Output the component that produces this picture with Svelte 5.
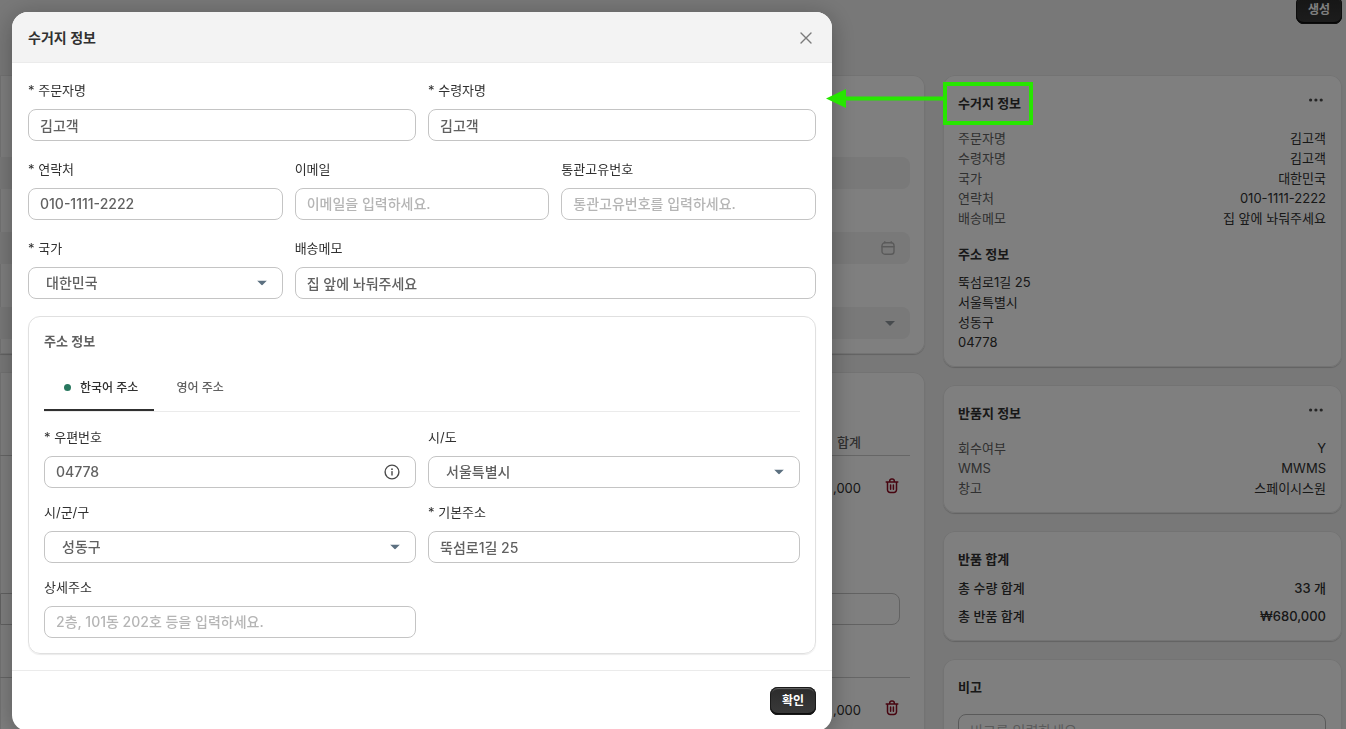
<script>
  const orderInfo = [
    ['주문자명', '김고객'],
    ['수령자명', '김고객'],
    ['국가', '대한민국'],
    ['연락처', '010-1111-2222'],
    ['배송메모', '집 앞에 놔둬주세요']
  ];
  const addressLines = ['뚝섬로1길 25', '서울특별시', '성동구', '04778'];
  const returnInfo = [
    ['회수여부', 'Y'],
    ['WMS', 'MWMS'],
    ['창고', '스페이시스원']
  ];
  const totals = [
    ['총 수량 합계', '33 개'],
    ['총 반품 합계', '₩680,000']
  ];
</script>

{#snippet caret()}
  <svg class="caret" width="10" height="5" viewBox="0 0 10 5" aria-hidden="true"><path d="M0 0h10L5 5z" fill="#5c7080" /></svg>
{/snippet}

{#snippet dots()}
  <button class="icon-btn" type="button">
    <svg width="16" height="6" viewBox="0 0 16 6" aria-hidden="true">
      <g fill="#4a4a4a"><circle cx="2.6" cy="3" r="1.6" /><circle cx="7.9" cy="3" r="1.6" /><circle cx="13.2" cy="3" r="1.6" /></g>
    </svg>
  </button>
{/snippet}

{#snippet trash()}
  <button class="icon-btn trash" type="button">
    <svg width="14" height="16" viewBox="0 0 14 16" fill="none" stroke="#8e0b21" stroke-width="1.5" stroke-linecap="round" stroke-linejoin="round" aria-hidden="true">
      <path d="M1.2 4h11.6M4.7 3.8V3a2 2 0 0 1 2-1.9h.6a2 2 0 0 1 2 1.9v.8M2.5 4.2v7.6a2.6 2.6 0 0 0 2.6 2.6h3.8a2.6 2.6 0 0 0 2.6-2.6V4.2M5.6 7v4.2M8.4 7v4.2" />
    </svg>
  </button>
{/snippet}

<div class="page">
  <header class="topbar"><button class="primary" type="button">생성</button></header>

  <div class="columns">
    <main>
      <section class="card wide filters">
        <div class="disabled"></div>
        <div class="disabled">
          <svg width="14" height="14" viewBox="0 0 14 14" fill="none" stroke="#b5b5b5" stroke-width="1.4" stroke-linecap="round" aria-hidden="true">
            <rect x="1" y="1.8" width="12" height="11.4" rx="2.8" /><path d="M1 5.8h12M3.8 .7v1M10.2 .7v1" />
          </svg>
        </div>
        <div class="disabled">
          <svg width="10" height="5" viewBox="0 0 10 5" aria-hidden="true"><path d="M0 0h10L5 5z" fill="#8f979d" /></svg>
        </div>
      </section>

      <section class="card wide items">
        <table>
          <thead><tr><th>합계</th><th class="act"></th></tr></thead>
          <tbody>
            <tr><td>,000</td><td class="act">{@render trash()}</td></tr>
            <tr class="note"><td colspan="2"><input type="text" /></td></tr>
            <tr><td>,000</td><td class="act">{@render trash()}</td></tr>
          </tbody>
        </table>
      </section>
    </main>

    <aside>
      <section class="card">
        <div class="card-head"><h2>수거지 정보</h2>{@render dots()}</div>
        <dl>
          {#each orderInfo as [name, value]}
            <div><dt>{name}</dt><dd>{value}</dd></div>
          {/each}
        </dl>
        <h2 class="sub">주소 정보</h2>
        {#each addressLines as line}<p>{line}</p>{/each}
      </section>

      <section class="card">
        <div class="card-head"><h2>반품지 정보</h2>{@render dots()}</div>
        <dl>
          {#each returnInfo as [name, value]}
            <div><dt>{name}</dt><dd>{value}</dd></div>
          {/each}
        </dl>
      </section>

      <section class="card totals">
        <h2>반품 합계</h2>
        <dl>
          {#each totals as [name, value]}
            <div><dt>{name}</dt><dd>{value}</dd></div>
          {/each}
        </dl>
      </section>

      <section class="card remark">
        <h2><label for="remark">비고</label></h2>
        <textarea id="remark" rows="3" placeholder="비고를 입력하세요."></textarea>
      </section>
    </aside>
  </div>
</div>

<div class="backdrop">
  <div class="dialog" role="dialog" aria-modal="true" aria-labelledby="dialog-title">
    <header class="dialog-head">
      <h1 id="dialog-title">수거지 정보</h1>
      <button class="icon-btn" type="button">
        <svg width="12" height="12" viewBox="0 0 12 12" fill="none" stroke="#7a7a7a" stroke-width="1.4" stroke-linecap="round" aria-hidden="true"><path d="M1 1l10 10M11 1L1 11" /></svg>
      </button>
    </header>

    <form class="dialog-body">
      <div class="grid two">
        <div class="field"><label for="orderer">* 주문자명</label><input id="orderer" type="text" value="김고객" /></div>
        <div class="field"><label for="receiver">* 수령자명</label><input id="receiver" type="text" value="김고객" /></div>
      </div>
      <div class="grid three">
        <div class="field"><label for="phone">* 연락처</label><input id="phone" type="tel" value="010-1111-2222" /></div>
        <div class="field"><label for="email">이메일</label><input id="email" type="email" placeholder="이메일을 입력하세요." /></div>
        <div class="field"><label for="customs">통관고유번호</label><input id="customs" type="text" placeholder="통관고유번호를 입력하세요." /></div>
        <div class="field">
          <label for="country">* 국가</label>
          <div class="select"><select id="country"><option>대한민국</option></select>{@render caret()}</div>
        </div>
        <div class="field span"><label for="memo">배송메모</label><input id="memo" type="text" value="집 앞에 놔둬주세요" /></div>
      </div>

      <section class="address">
        <h2>주소 정보</h2>
        <div class="tabs" role="tablist">
          <button class="tab active" type="button" role="tab" aria-selected="true"><i></i>한국어 주소</button>
          <button class="tab" type="button" role="tab" aria-selected="false">영어 주소</button>
        </div>
        <div class="grid two tight">
          <div class="field">
            <label for="zip">* 우편번호</label>
            <div class="with-icon">
              <input id="zip" type="text" value="04778" />
              <svg class="info" width="16" height="16" viewBox="0 0 16 16" fill="none" stroke="#4a4a4a" stroke-width="1.4" stroke-linecap="round" aria-hidden="true">
                <circle cx="8" cy="8" r="6.9" /><path d="M8 7.6v3.4" /><circle cx="8" cy="5.2" r=".9" fill="#4a4a4a" stroke="none" />
              </svg>
            </div>
          </div>
          <div class="field">
            <label for="state">시/도</label>
            <div class="select"><select id="state"><option>서울특별시</option></select>{@render caret()}</div>
          </div>
          <div class="field">
            <label for="city">시/군/구</label>
            <div class="select"><select id="city"><option>성동구</option></select>{@render caret()}</div>
          </div>
          <div class="field"><label for="addr1">* 기본주소</label><input id="addr1" type="text" value="뚝섬로1길 25" /></div>
          <div class="field"><label for="addr2">상세주소</label><input id="addr2" type="text" placeholder="2층, 101동 202호 등을 입력하세요." /></div>
        </div>
      </section>
    </form>

    <footer><button class="primary" type="button">확인</button></footer>
  </div>
</div>

<svg class="callout" width="207" height="43" viewBox="0 0 207 43" aria-hidden="true">
  <rect x="119" y="2" width="86" height="39" fill="none" stroke="#27e600" stroke-width="4" />
  <path d="M118 16.5H19" stroke="#27e600" stroke-width="4" />
  <path d="M0 16.5L20 7v19z" fill="#27e600" />
</svg>

<style>
  :global(body) {
    margin: 0;
    overflow: hidden;
    background: #f1f1f1;
    color: #303030;
    font-family: Inter, 'Noto Sans CJK KR', sans-serif;
    font-size: 13px;
    line-height: 20px;
  }
  * { box-sizing: border-box; }
  h1, h2, p, dl, dd { margin: 0; }
  h1 { font-size: 14px; font-weight: 600; }
  h2 { font-size: 13px; line-height: 20px; font-weight: 600; }
  button, input, select, textarea { font: inherit; color: inherit; }

  .page { height: 100vh; overflow: hidden; padding-right: 4px; }
  .topbar { display: flex; justify-content: flex-end; margin-top: -4px; margin-bottom: 51px; }
  .columns { display: flex; gap: 18px; align-items: stretch; }
  main { flex: 1; min-width: 0; display: flex; flex-direction: column; gap: 18px; }
  aside { flex: none; width: 399px; display: flex; flex-direction: column; gap: 18px; }

  .card {
    background: #fff;
    border-radius: 12px;
    padding: 18px 16px 15px 15px;
    box-shadow: inset 0 0 0 1px #e6e6e6, 0 1px 1px #00000030;
  }
  .wide { border-radius: 0 12px 12px 0; padding-left: 0; padding-right: 15px; }
  .filters { display: grid; gap: 43px; padding-top: 82px; }
  .disabled {
    height: 32px;
    border-radius: 0 8px 8px 0;
    background: #f2f2f2;
    display: flex;
    align-items: center;
    justify-content: flex-end;
    padding-right: 15px;
  }
  .items { flex: 1; padding-top: 60px; }
  table { width: 100%; border-collapse: collapse; }
  th, td { text-align: right; padding: 0; vertical-align: top; }
  th { font-weight: 500; color: #616161; height: 23px; border-bottom: 1px solid #ccc; }
  td { height: 75px; padding-top: 22px; }
  .act { width: 49px; padding-right: 11px; }
  .note td { height: 147px; padding: 63px 10px 0 0; border-bottom: 1px solid #ccc; }
  .note input { border-radius: 0 8px 8px 0; }

  .card-head { display: flex; justify-content: space-between; margin-bottom: 15px; }
  .icon-btn { border: 0; background: none; padding: 0; display: inline-flex; align-items: center; }
  .card-head .icon-btn { height: 14px; padding-right: 2px; }
  .trash { height: 16px; }
  dl div { display: flex; justify-content: space-between; }
  dt { color: #616161; }
  .sub { margin: 16px 0 8px; }
  .totals dl { display: grid; gap: 8px; margin-top: 9px; font-weight: 500; }
  .totals dt { color: inherit; }
  .remark h2 { margin-bottom: 17px; }
  textarea {
    display: block;
    width: 100%;
    resize: none;
    border: 1px solid #b5b5b5;
    border-radius: 8px;
    padding: 6px 11px;
    font-size: 14px;
  }

  .backdrop { position: fixed; inset: 0; padding: 12px; overflow: hidden; background: rgba(0, 0, 0, 0.5); }
  .dialog {
    width: 100%;
    max-width: 820px;
    background: #fff;
    border-radius: 16px;
    overflow: hidden;
    box-shadow: 0 4px 24px rgba(0, 0, 0, 0.3);
  }
  .dialog-head {
    display: flex;
    align-items: center;
    justify-content: space-between;
    padding: 16px 20px 14px 16px;
    background: #f3f3f3;
    border-bottom: 1px solid #ebebeb;
  }
  .dialog-body { padding: 17px 16px 16px; }
  .grid { display: grid; column-gap: 12px; row-gap: 18px; }
  .two { grid-template-columns: 1fr 1fr; }
  .three { grid-template-columns: repeat(3, 1fr); margin: 18px 0 17px; }
  .tight { row-gap: 14px; }
  .span { grid-column: span 2; }
  .field { display: grid; gap: 9px; min-width: 0; }

  input, select {
    display: block;
    width: 100%;
    height: 32px;
    border: 1px solid #c4c4c4;
    border-radius: 8px;
    background: #fff;
    padding: 0 11px 1px;
    font-size: 14px;
    font-weight: 500;
    color: #616161;
  }
  select { appearance: none; padding-left: 17px; }
  input::placeholder, textarea::placeholder { color: #b5b5b5; opacity: 1; }
  .select, .with-icon { position: relative; }
  .caret, .info { position: absolute; top: 50%; transform: translateY(-50%); right: 16px; pointer-events: none; }

  .address { border: 1px solid #e0e0e0; border-radius: 12px; padding: 14px 15px 15px; box-shadow: 0 1px 1px #00000014; }
  .address h2 { color: #616161; }
  .tabs { display: flex; height: 49px; margin: 12px 0 15px; border-bottom: 1px solid #ebebeb; }
  .tab {
    display: flex;
    align-items: center;
    border: 0;
    border-bottom: 2px solid transparent;
    background: none;
    padding: 3px 22px 0;
    font-size: 12px;
    font-weight: 500;
    color: #616161;
  }
  .active { padding: 3px 16px 0 20px; color: #303030; border-color: #303030; }
  .tab i { width: 7px; height: 7px; margin-right: 9px; border-radius: 50%; background: #29785f; }

  footer { display: flex; justify-content: flex-end; padding: 16px; border-top: 1px solid #ebebeb; }
  .primary {
    height: 28px;
    padding: 0 12px;
    border: 0;
    border-radius: 8px;
    background: linear-gradient(#2b2b2b, #3a3a3a);
    box-shadow: inset 0 0 0 1px #1a1a1a, inset 0 2px 1px #666, inset 0 -2px 0 #0c0c0c;
    color: #fff;
    font-size: 12px;
    line-height: 16px;
    font-weight: 700;
  }

  .callout { position: fixed; top: 82px; right: 313px; }
</style>
